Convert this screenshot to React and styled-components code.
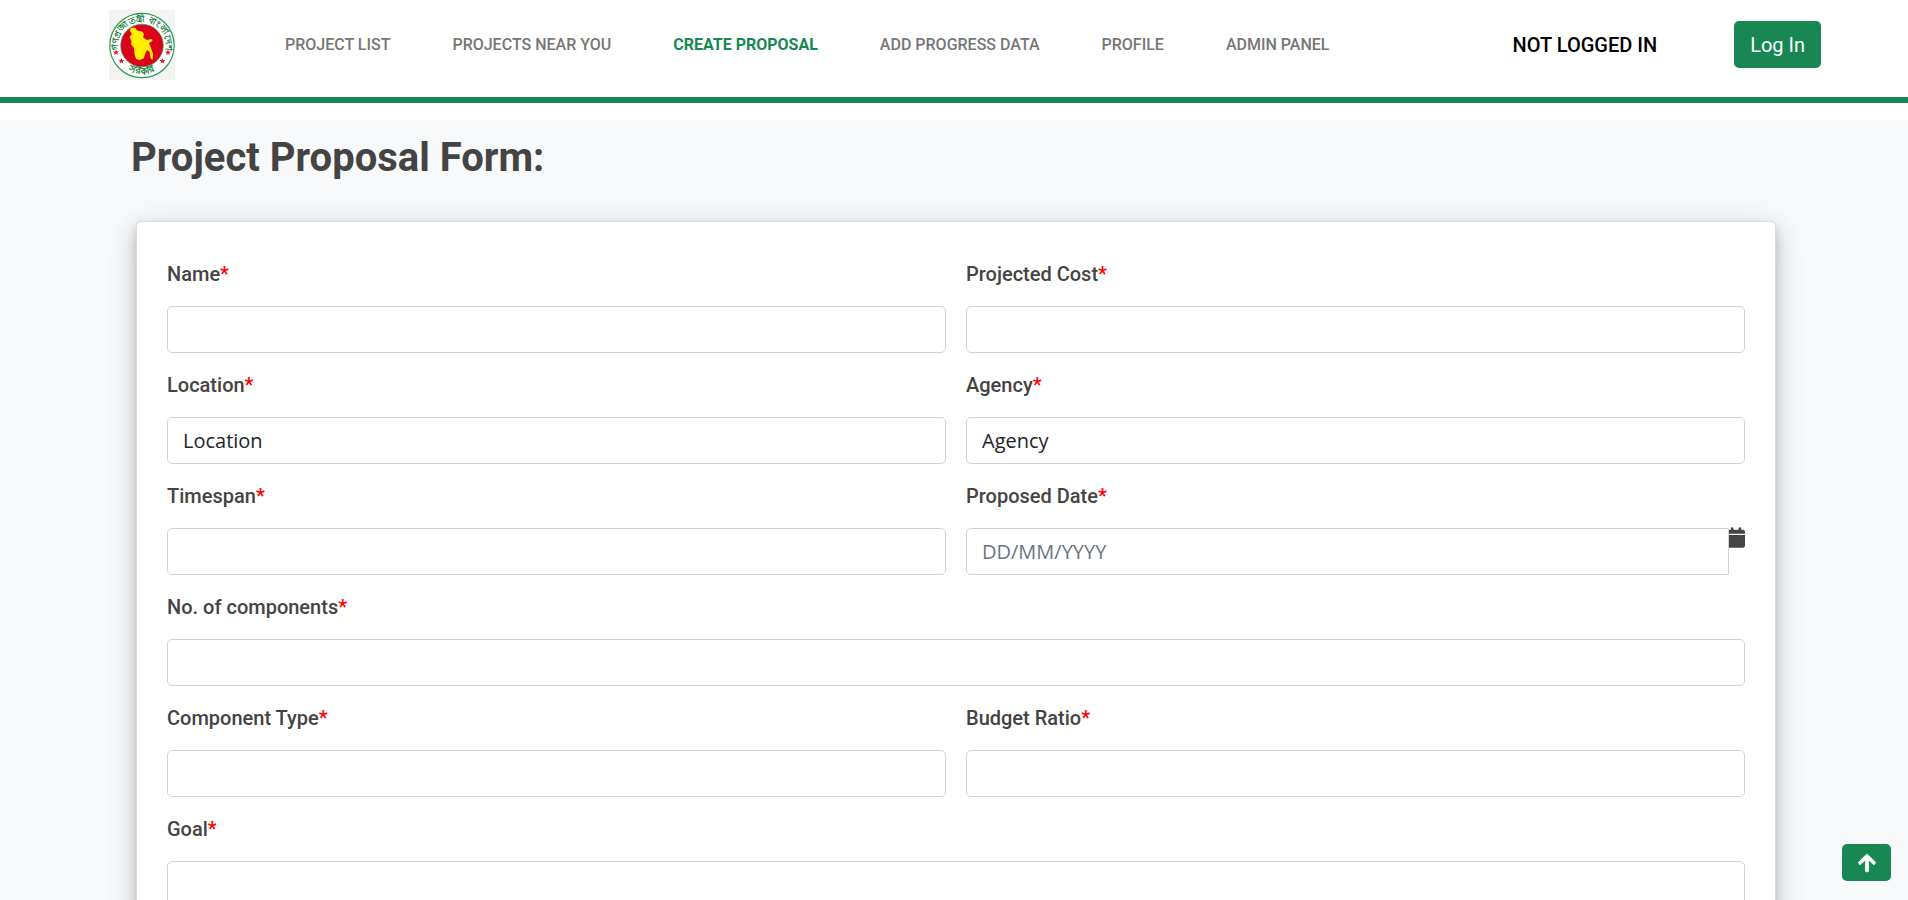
import React from "react";
import styled, { createGlobalStyle } from "styled-components";
import { FaArrowUp } from "react-icons/fa";
import { FaCalendar } from "react-icons/fa6";

const GlobalStyle = createGlobalStyle`
  *, *::before, *::after { box-sizing: border-box; }
  body {
    margin: 0;
    background: #f8f9fb;
    color: #444;
    font-family: "Open Sans", sans-serif;
    font-size: 20px;
    line-height: 30px;
  }
`;

const green = "#198754";

const Header = styled.header`
  display: flex;
  align-items: center;
  height: 103px;
  padding: 0 87px 8px 109px;
  background: #fff;
  border-bottom: 6px solid ${green};
`;

const LogoLink = styled.a`
  display: flex;
  margin-right: 110px;
`;

const Nav = styled.nav`
  display: flex;
  flex: 1;
  gap: 62px;
`;

const NavLink = styled.a`
  font-family: Roboto, sans-serif;
  font-size: 16px;
  line-height: 24px;
  font-weight: ${(p) => (p.$active ? 700 : 500)};
  color: ${(p) => (p.$active ? green : "#777")};
  text-decoration: none;
  text-transform: uppercase;
  white-space: nowrap;
`;

const Status = styled.span`
  margin-right: 77px;
  font-family: Roboto, sans-serif;
  font-weight: 500;
  color: #000;
  white-space: nowrap;
`;

const LoginButton = styled.button`
  height: 47px;
  padding: 0 16px;
  border: 0;
  border-radius: 5px;
  background: ${green};
  color: #fff;
  font: 400 20px/30px Roboto, sans-serif;
  white-space: nowrap;
`;

const Strip = styled.div`
  height: 17px;
  background: #fff;
`;

const Main = styled.main`
  padding: 14px 132px 40px 136px;
`;

const Title = styled.h1`
  margin: 0 0 39px -5px;
  font: 700 40px/48px Roboto, sans-serif;
`;

const Card = styled.form`
  display: grid;
  grid-template-columns: 1fr 1fr;
  column-gap: 20px;
  padding: 20px 30px 30px;
  border: 1px solid #d9dce0;
  border-radius: 5px;
  background: #fff;
  box-shadow: 0 5px 10px rgba(0, 0, 0, 0.15), 0 8px 30px rgba(0, 0, 0, 0.22);
`;

const Field = styled.div`
  grid-column: ${(p) => (p.$wide ? "1 / -1" : "auto")};
`;

const Label = styled.label`
  display: block;
  padding: 17px 0;
  font-family: Roboto, sans-serif;
  font-weight: 500;
`;

const Required = styled.span`
  color: red;
`;

const Input = styled.input`
  display: block;
  width: 100%;
  height: 47px;
  padding: 0 15px;
  border: 1px solid #ced4da;
  border-radius: ${(p) => (p.$joined ? "5px 0 0 5px" : "5px")};
  background: #fff;
  color: #212529;
  font: inherit;
  z-index: 1;
  &::placeholder { color: #6c757d; opacity: 1; }
`;

const Select = styled(Input).attrs({ as: "select" })`
  appearance: none;
`;

const TextArea = styled(Input).attrs({ as: "textarea" })`
  height: 120px;
  padding: 8px 15px;
  resize: none;
`;

const InputGroup = styled.div`
  display: flex;
  align-items: flex-start;
`;

const CalendarIcon = styled(FaCalendar)`
  flex: none;
  width: 18px;
  height: 21px;
  margin: -1px 0 0 -2px;
`;

const TopButton = styled.button`
  position: fixed;
  right: 17px;
  bottom: 19px;
  display: flex;
  align-items: center;
  justify-content: center;
  width: 49px;
  height: 37px;
  padding: 0;
  border: 0;
  border-radius: 5px;
  background: ${green};
  color: #fff;
  font-size: 20px;
  z-index: 2;
  svg { stroke: currentColor; stroke-width: 22; overflow: visible; }
`;

const STAR = "0,-3.2 .8,-1 3.1,-1 1.3,.4 1.9,2.6 0,1.3 -1.9,2.6 -1.3,.4 -3.1,-1 -.8,-1";

function Logo() {
  return (
    <svg width="66" height="70" viewBox="0 0 66 70" role="img" aria-label="Government of Bangladesh">
      <defs>
        <path id="upper" d="M11 45.5A24 24 0 1 1 55 45.5" />
        <path id="lower" d="M10 52.5A28.5 28.5 0 0 0 56 52.5" />
      </defs>
      <rect width="66" height="70" fill="#f4f4f4" />
      <circle cx="33" cy="35.5" r="32.2" fill="#fff" stroke="#2d9a50" strokeWidth="1.2" />
      <circle cx="33" cy="35.5" r="21.3" fill="#dc0318" stroke="#329954" strokeWidth=".7" />
      <path
        d="M21.5 18L26 17.5 28 20.5 33 21.5 35 24 34 27.5 38 30 43 29 43.5 31 40 33 42 38 44 44 43.5 50 41.5 48 40.5 42 38 40 36 44 35 48 31 50 27 49 25.5 44 25 38 22 34 22.5 31 20.5 27 23 24 21 21Z"
        fill="#fff000"
      />
      <g fontFamily="'Noto Sans', 'DejaVu Sans', sans-serif" fontWeight="700" fontSize="9" fill="#15803d">
        <text><textPath href="#upper" startOffset="50%" textAnchor="middle">গণপ্রজাতন্ত্রী বাংলাদেশ</textPath></text>
        <text fontSize="10"><textPath href="#lower" startOffset="50%" textAnchor="middle">সরকার</textPath></text>
      </g>
      <g fill="#e3172c">
        <polygon points={STAR} transform="translate(7 42.5)" />
        <polygon points={STAR} transform="translate(12.5 51)" />
        <polygon points={STAR} transform="translate(59 42.5)" />
        <polygon points={STAR} transform="translate(53.5 51)" />
      </g>
    </svg>
  );
}

const links = ["Project List", "Projects Near You", "Create Proposal", "Add Progress Data", "Profile", "Admin Panel"];

const fields = [
  { id: "name", label: "Name" },
  { id: "cost", label: "Projected Cost" },
  { id: "location", label: "Location", type: "select" },
  { id: "agency", label: "Agency", type: "select" },
  { id: "timespan", label: "Timespan" },
  { id: "date", label: "Proposed Date", type: "date" },
  { id: "components", label: "No. of components", wide: true },
  { id: "type", label: "Component Type" },
  { id: "ratio", label: "Budget Ratio" },
  { id: "goal", label: "Goal", type: "textarea", wide: true },
];

function Control({ id, label, type }) {
  if (type === "select") {
    return (
      <Select id={id}>
        <option>{label}</option>
      </Select>
    );
  }
  if (type === "textarea") return <TextArea id={id} />;
  if (type === "date") {
    return (
      <InputGroup>
        <Input id={id} $joined placeholder="DD/MM/YYYY" />
        <CalendarIcon aria-hidden="true" />
      </InputGroup>
    );
  }
  return <Input id={id} />;
}

export default function App() {
  return (
    <>
      <GlobalStyle />
      <Header>
        <LogoLink href="#">
          <Logo />
        </LogoLink>
        <Nav>
          {links.map((text) => (
            <NavLink key={text} href="#" $active={text === "Create Proposal"}>
              {text}
            </NavLink>
          ))}
        </Nav>
        <Status>NOT LOGGED IN</Status>
        <LoginButton type="button">Log In</LoginButton>
      </Header>
      <Strip />
      <Main>
        <Title>Project Proposal Form:</Title>
        <Card>
          {fields.map((f) => (
            <Field key={f.id} $wide={f.wide}>
              <Label htmlFor={f.id}>
                {f.label}
                <Required>*</Required>
              </Label>
              <Control {...f} />
            </Field>
          ))}
        </Card>
      </Main>
      <TopButton type="button" aria-label="Back to top">
        <FaArrowUp />
      </TopButton>
    </>
  );
}
